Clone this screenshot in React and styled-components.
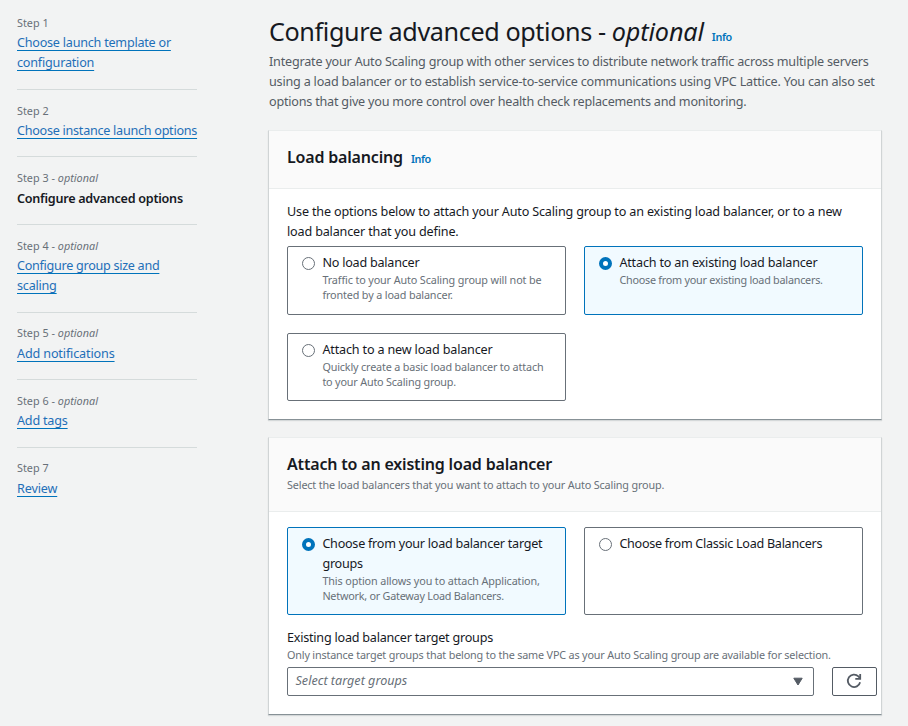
import React from 'react';
import styled, { createGlobalStyle, css } from 'styled-components';

const GlobalStyle = createGlobalStyle`
  *, *::before, *::after { box-sizing: border-box; }
  body {
    margin: 0;
    background: #f2f3f3;
    color: #16191f;
    font-family: "Noto Sans", "Open Sans", sans-serif;
    font-size: 12.6px;
    line-height: 20px;
    letter-spacing: -0.18px;
  }
  h1, h2, p { margin: 0; }
`;

const tracking = css`
  ${({ $track }) => $track !== undefined && `letter-spacing: ${$track}px;`}
`;

const Page = styled.div`
  display: grid;
  grid-template-columns: 180px 614px;
  column-gap: 71px;
  padding-left: 17px;
  height: 726px;
  overflow: hidden;
`;

const Steps = styled.nav`
  display: flex;
  flex-direction: column;
  padding-top: 2.3px;
`;

const Step = styled.div`
  display: flex;
  flex-direction: column;
  align-items: flex-start;
  gap: 3.4px;
  padding: 12.7px 0 15.5px;

  & + & {
    border-top: 1px solid #d5dbdb;
  }
`;

const StepLabel = styled.div`
  font-size: 10.8px;
  line-height: 15px;
  letter-spacing: 0.02px;
  color: #687078;
  white-space: nowrap;
`;

const StepLink = styled.a`
  color: #1f6fb8;
  line-height: 19.8px;
  white-space: pre;
  text-decoration: underline;
  text-decoration-color: #0073bb;
  text-decoration-thickness: 1px;
  text-decoration-skip-ink: none;
  text-underline-offset: 3px;
  ${tracking}
`;

const CurrentStep = styled.strong`
  font-weight: 600;
  line-height: 19.8px;
  white-space: nowrap;
  ${tracking}
`;

const Main = styled.main`
  display: flex;
  flex-direction: column;
  padding-top: 14px;
`;

const PageHeader = styled.header`
  height: 116px;
  padding-left: 1px;
`;

const Title = styled.h1`
  font-size: 25.2px;
  font-weight: 400;
  line-height: 34px;
  white-space: nowrap;
  letter-spacing: -0.4px;

  em { letter-spacing: -0.15px; }
`;

const Info = styled.a`
  margin-left: 8px;
  font-size: 10.8px;
  font-weight: 600;
  letter-spacing: -0.4px;
  color: #0073bb;
`;

const Intro = styled.p`
  display: flex;
  flex-direction: column;
  margin-top: -1.6px;
  font-size: 12.6px;
  line-height: 19.6px;
  color: #545b64;
`;

const Line = styled.span`
  display: block;
  white-space: nowrap;
  ${tracking}
`;

const Panel = styled.section`
  display: flex;
  flex-direction: column;
  height: ${({ $height }) => $height}px;
  margin-bottom: 17px;
  background: #fff;
  border: 1px solid #d0d4d5;
  border-top-color: #eaeded;
  border-bottom-color: #879196;
  box-shadow: 0 1px 1px rgba(0, 28, 36, 0.12);
`;

const PanelHeader = styled.div`
  display: flex;
  flex-direction: column;
  gap: 3px;
  height: ${({ $height }) => $height}px;
  padding: 15px 18px 0;
  background: #fafafa;
  border-bottom: 1px solid #eaeded;
`;

const PanelTitle = styled.h2`
  font-size: 16px;
  font-weight: 600;
  line-height: 22px;
  white-space: nowrap;
  letter-spacing: -0.18px;
`;

const PanelBody = styled.div`
  padding: ${({ $top }) => $top}px 18px 0;
`;

const Description = styled.div`
  margin-bottom: 4px;
`;

const Hint = styled.p`
  font-size: 10.8px;
  line-height: 14.6px;
  color: #687078;
  white-space: nowrap;
  ${tracking}
`;

const Tiles = styled.div`
  display: grid;
  grid-template-columns: 279px 279px;
  grid-template-rows: ${({ $rows }) => $rows};
  gap: 18px;
`;

const TileBox = styled.label`
  display: flex;
  gap: 7.4px;
  padding: 6px 14px;
  border: 1px solid ${({ $selected }) => ($selected ? '#0073bb' : '#687078')};
  border-radius: 2px;
  background: ${({ $selected }) => ($selected ? '#f1faff' : '#fff')};
`;

const Radio = styled.span`
  flex: none;
  width: 13px;
  height: 13px;
  margin-top: 4.4px;
  border-radius: 50%;
  background: #fff;
  border: ${({ $selected }) => ($selected ? '4px solid #0073bb' : '1px solid #687078')};
`;

const FieldLabel = styled.div`
  margin-top: 13px;
  white-space: nowrap;
  ${tracking}
`;

const FieldRow = styled.div`
  display: flex;
  gap: 18px;
  width: 590px;
  margin-top: 4px;
`;

const Select = styled.div`
  display: flex;
  justify-content: space-between;
  align-items: center;
  width: 527px;
  height: 29px;
  padding: 0 10px 0 7.5px;
  border: 1px solid #687078;
  border-radius: 2px;
  font-style: italic;
  letter-spacing: 0;
  color: #687078;
`;

const RefreshButton = styled.button`
  display: flex;
  align-items: center;
  justify-content: center;
  width: 45px;
  height: 29px;
  padding: 0 1px 0 0;
  background: #fff;
  border: 1px solid #545b64;
  border-radius: 2px;
`;

const steps = [
  { n: 1, lines: [['Choose launch template or', -0.23], ['configuration', -0.2]] },
  { n: 2, lines: [['Choose instance launch options', -0.26]] },
  { n: 3, optional: true, current: true, lines: [['Configure advanced options', -0.26]] },
  { n: 4, optional: true, lines: [['Configure group size and', -0.28], ['scaling', -0.22]] },
  { n: 5, optional: true, lines: [['Add notifications', -0.14]] },
  { n: 6, optional: true, lines: [['Add tags', -0.2]] },
  { n: 7, lines: [['Review', -0.14]] },
];

function Tile({ selected, title, hints = [] }) {
  return (
    <TileBox $selected={selected}>
      <Radio $selected={selected} />
      <div>
        {title.map(([text, track]) => (
          <Line key={text} $track={track}>{text}</Line>
        ))}
        {hints.map(([text, track]) => (
          <Hint key={text} $track={track}>{text}</Hint>
        ))}
      </div>
    </TileBox>
  );
}

export default function App() {
  return (
    <Page>
      <GlobalStyle />
      <Steps>
        {steps.map(({ n, optional, current, lines }) => (
          <Step key={n}>
            <StepLabel>
              Step {n}
              {optional && <> - <em>optional</em></>}
            </StepLabel>
            <div>
              {lines.map(([text, track]) => (
                <Line key={text}>
                  {current
                    ? <CurrentStep $track={track}>{text}</CurrentStep>
                    : <StepLink $track={track}>{text}</StepLink>}
                </Line>
              ))}
            </div>
          </Step>
        ))}
      </Steps>

      <Main>
        <PageHeader>
          <Title>
            Configure advanced options - <em>optional</em>
            <Info>Info</Info>
          </Title>
          <Intro>
            <Line $track={-0.2}>Integrate your Auto Scaling group with other services to distribute network traffic across multiple servers</Line>
            <Line $track={-0.2}>using a load balancer or to establish service-to-service communications using VPC Lattice. You can also set</Line>
            <Line $track={-0.21}>options that give you more control over health check replacements and monitoring.</Line>
          </Intro>
        </PageHeader>

        <Panel $height={290}>
          <PanelHeader $height={58}>
            <PanelTitle>Load balancing<Info>Info</Info></PanelTitle>
          </PanelHeader>
          <PanelBody $top={13}>
            <Description>
              <Line $track={-0.165}>Use the options below to attach your Auto Scaling group to an existing load balancer, or to a new</Line>
              <Line $track={-0.165}>load balancer that you define.</Line>
            </Description>
            <Tiles $rows="69px 68px">
              <Tile
                title={[['No load balancer', -0.23]]}
                hints={[
                  ['Traffic to your Auto Scaling group will not be', -0.12],
                  ['fronted by a load balancer.', -0.14],
                ]}
              />
              <Tile
                selected
                title={[['Attach to an existing load balancer', -0.18]]}
                hints={[['Choose from your existing load balancers.', -0.24]]}
              />
              <Tile
                title={[['Attach to a new load balancer', -0.17]]}
                hints={[
                  ['Quickly create a basic load balancer to attach', -0.16],
                  ['to your Auto Scaling group.', -0.18],
                ]}
              />
            </Tiles>
          </PanelBody>
        </Panel>

        <Panel $height={278}>
          <PanelHeader $height={74}>
            <PanelTitle>Attach to an existing load balancer</PanelTitle>
            <Hint $track={-0.14}>Select the load balancers that you want to attach to your Auto Scaling group.</Hint>
          </PanelHeader>
          <PanelBody $top={15}>
            <Tiles $rows="88px">
              <Tile
                selected
                title={[['Choose from your load balancer target', -0.25], ['groups', -0.25]]}
                hints={[
                  ['This option allows you to attach Application,', -0.12],
                  ['Network, or Gateway Load Balancers.', -0.23],
                ]}
              />
              <Tile title={[['Choose from Classic Load Balancers', -0.28]]} />
            </Tiles>
            <FieldLabel $track={-0.23}>Existing load balancer target groups</FieldLabel>
            <Hint $track={-0.17}>
              Only instance target groups that belong to the same VPC as your Auto Scaling group are available for selection.
            </Hint>
            <FieldRow>
              <Select>
                Select target groups
                <svg width="10" height="9" viewBox="0 0 10 9">
                  <path d="M0.8 1.2h8.4L5 8z" fill="#545b64" stroke="#545b64" strokeWidth="1" strokeLinejoin="round" />
                </svg>
              </Select>
              <RefreshButton aria-label="Refresh">
                <svg width="16" height="16" viewBox="0 0 16 16" fill="none" stroke="#545b64" strokeWidth="1.8">
                  <path d="M14.1 9.2a6.2 6.2 0 1 1-1.7-5.8l1.4 1.6" />
                  <path d="M14.2 1v4.8H9.3" />
                </svg>
              </RefreshButton>
            </FieldRow>
          </PanelBody>
        </Panel>
      </Main>
    </Page>
  );
}
